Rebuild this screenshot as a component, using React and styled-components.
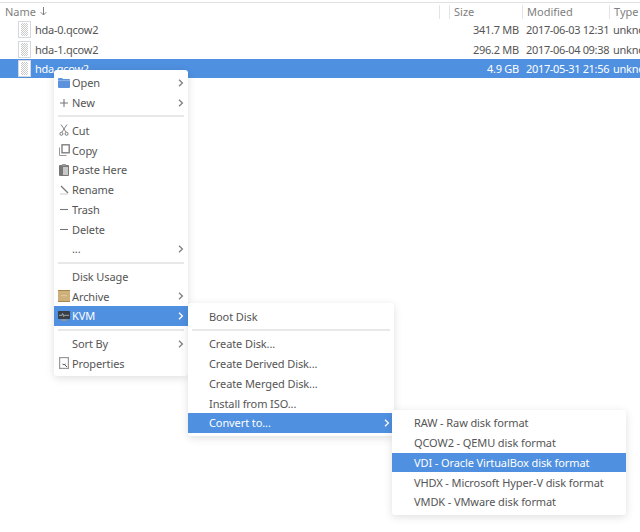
import React from "react";
import styled, { createGlobalStyle } from "styled-components";

const Global = createGlobalStyle`
  html, body { margin: 0; padding: 0; background: #fff; }
  body { font-family: "Noto Sans", "Open Sans", sans-serif; font-size: 11px; color: #555; }
`;

const Page = styled.div`
  position: relative;
  width: 640px;
  height: 532px;
  overflow: hidden;
  background: #fff;
`;

const Header = styled.div`
  display: grid;
  grid-template-columns: 439px 10px 73px 87px 31px;
  height: 17px;
  margin-top: 2px;
  border-top: 1px solid #e2e2e2;
  color: #808080;
  align-items: center;
`;

const HeadCell = styled.div`
  display: flex;
  align-items: center;
  gap: 4px;
  height: 14px;
  line-height: 14px;
  padding-left: ${p => p.$pad ?? 4}px;
  border-left: ${p => (p.$first ? "none" : "1px solid #e4e4e4")};
  white-space: nowrap;
  overflow: hidden;
`;

const Row = styled.div`
  display: grid;
  grid-template-columns: 440px 80px 87px 33px;
  height: ${p => (p.$selected ? 18.5 : 19.5)}px;
  align-items: center;
  background: ${p => (p.$selected ? "#4f90e0" : "#fff")};
  color: ${p => (p.$selected ? "#fff" : "#555")};
  white-space: nowrap;
  letter-spacing: -0.25px;
`;

const NameCell = styled.div`
  display: flex;
  align-items: center;
  gap: 4px;
  padding-left: 18px;
`;

const SizeCell = styled.div`
  text-align: right;
  padding-right: 1px;
`;

const DateCell = styled.div`
  padding-left: 6px;
  letter-spacing: -0.33px;
`;

const TypeCell = styled.div`
  padding-left: 6px;
  overflow: hidden;
`;

const Menu = styled.div`
  position: absolute;
  left: ${p => p.$left}px;
  top: ${p => p.$top}px;
  width: ${p => p.$width}px;
  padding: 3px 0;
  background: #fff;
  border-radius: 3px;
  box-shadow: 0 2px 8px rgba(0, 0, 0, 0.13);
  color: #555;
  letter-spacing: -0.1px;
`;

const Item = styled.div`
  display: flex;
  align-items: center;
  height: 19.75px;
  padding-left: ${p => p.$indent}px;
  padding-right: 4px;
  background: ${p => (p.$active ? "#4f90e0" : "transparent")};
  color: ${p => (p.$active ? "#fff" : "inherit")};
  white-space: nowrap;
`;

const IconSlot = styled.span`
  display: flex;
  align-items: center;
  justify-content: center;
  width: 14px;
  height: 14px;
  margin-right: 1px;
  margin-left: -15px;
  flex: none;
`;

const Label = styled.span`
  flex: 1;
`;

const Separator = styled.div`
  height: 2px;
  margin: 2.95px 4px;
  background: #e8e8e8;
`;

const Chevron = ({ light }) => (
  <svg width="6" height="8" viewBox="0 0 6 8" fill="none" stroke={light ? "#fff" : "#808080"} strokeWidth="1.3">
    <path d="M1 .8 4.4 4 1 7.2" />
  </svg>
);

const SortArrow = () => (
  <svg width="7" height="9" viewBox="0 0 7 9" fill="none" stroke="#808080" strokeWidth="1">
    <path d="M3.5 0v8M.8 5.3 3.5 8l2.7-2.7" />
  </svg>
);

const FileIcon = ({ id }) => (
  <svg width="13" height="17" viewBox="0 0 13 17" style={{ flex: "none" }}>
    <defs>
      <pattern id={id} width="2" height="2" patternUnits="userSpaceOnUse">
        <rect width="2" height="2" fill="#fff" />
        <rect width="1" height="1" fill="#c9c9c9" />
        <rect x="1" y="1" width="1" height="1" fill="#c9c9c9" />
      </pattern>
    </defs>
    <rect x=".5" y=".5" width="12" height="16" fill="#fff" stroke="#d5d8de" />
    <rect x="3" y="2" width="7" height="13" fill={`url(#${id})`} />
  </svg>
);

const G = "#777";
const icons = {
  open: (
    <svg width="12" height="10" viewBox="0 0 12 10">
      <path d="M0 1a1 1 0 0 1 1-1h3l1 1h6a1 1 0 0 1 1 1v7a1 1 0 0 1-1 1H1a1 1 0 0 1-1-1z" fill="#5c93dc" />
      <path d="M0 2h12v1H0z" fill="#8ab4e8" />
    </svg>
  ),
  new: (
    <svg width="10" height="10" viewBox="0 0 10 10"><path d="M5 1v8M1 5h8" stroke={G} strokeWidth="1.1" /></svg>
  ),
  cut: (
    <svg width="10" height="12" viewBox="0 0 10 12" fill="none" stroke={G}>
      <path d="M2 .5 7 8M8 .5 3 8" strokeWidth=".9" />
      <circle cx="2.4" cy="9.8" r="1.5" />
      <circle cx="7.6" cy="9.8" r="1.5" />
    </svg>
  ),
  copy: (
    <svg width="11" height="12" viewBox="0 0 11 12" fill="none">
      <path d="M.5 3.5v8h7" stroke="#999" />
      <rect x="3" y=".8" width="7.2" height="8" stroke={G} strokeWidth="1.3" />
    </svg>
  ),
  paste: (
    <svg width="10" height="12" viewBox="0 0 10 12">
      <rect x="0" y="1" width="10" height="11" rx="1" fill="#777" />
      <rect x="3" y="0" width="4" height="2" fill="#999" />
      <rect x="4" y="3" width="5" height="8" fill="#c8c8c8" />
    </svg>
  ),
  rename: (
    <svg width="12" height="12" viewBox="0 0 12 12" fill="none">
      <path d="M3 2 10 9" stroke={G} strokeWidth="1.3" />
      <path d="M2 10h8" stroke="#ddd" strokeWidth="1.5" />
    </svg>
  ),
  dash: (
    <svg width="10" height="3" viewBox="0 0 10 3"><path d="M1 1.5h8" stroke={G} strokeWidth="1.1" /></svg>
  ),
  archive: (
    <svg width="12" height="12" viewBox="0 0 12 12">
      <rect width="12" height="12" fill="#cdb07a" />
      <rect width="12" height="1" fill="#a9874c" />
      <rect y="11" width="12" height="1" fill="#a9874c" />
      <rect x="3" y="5" width="6" height="1.2" fill="#e0c996" />
    </svg>
  ),
  kvm: (
    <svg width="12" height="12" viewBox="0 0 12 12">
      <rect y="1" width="12" height="8" rx=".5" fill="#3a3f45" />
      <path d="M1 5.3h3l.7-1.8 1 3 .8-1.2H11" stroke="#dfe6ee" strokeWidth=".6" fill="none" />
      <rect x="3.5" y="9" width="5" height="2" fill="#8d949c" />
    </svg>
  ),
  props: (
    <svg width="10" height="12" viewBox="0 0 10 12" fill="none">
      <rect x=".6" y=".6" width="8.8" height="10.8" stroke="#999" strokeWidth="1.2" />
      <path d="M6 8 8 10M3.5 7a2 2 0 0 0 3 0" stroke="#555" />
    </svg>
  ),
};

const MenuItem = ({ icon, label, sub, active, indent = 18 }) => (
  <Item $active={active} $indent={indent}>
    {icon && <IconSlot>{icons[icon]}</IconSlot>}
    <Label>{label}</Label>
    {sub && <Chevron light={active} />}
  </Item>
);

const files = [
  { id: "f0", name: "hda-0.qcow2", size: "341.7 MB", date: "2017-06-03 12:31" },
  { id: "f1", name: "hda-1.qcow2", size: "296.2 MB", date: "2017-06-04 09:38" },
  { id: "f2", name: "hda.qcow2", size: "4.9 GB", date: "2017-05-31 21:56", selected: true },
];

export default function App() {
  return (
    <Page>
      <Global />
      <Header>
        <HeadCell $first $pad={5}>Name <SortArrow /></HeadCell>
        <HeadCell />
        <HeadCell>Size</HeadCell>
        <HeadCell>Modified</HeadCell>
        <HeadCell>Type</HeadCell>
      </Header>
      {files.map(f => (
        <Row key={f.id} $selected={f.selected}>
          <NameCell><FileIcon id={f.id} />{f.name}</NameCell>
          <SizeCell>{f.size}</SizeCell>
          <DateCell>{f.date}</DateCell>
          <TypeCell>unknown</TypeCell>
        </Row>
      ))}

      <Menu $left={54} $top={70} $width={134}>
        <MenuItem icon="open" label="Open" sub />
        <MenuItem icon="new" label="New" sub />
        <Separator />
        <MenuItem icon="cut" label="Cut" />
        <MenuItem icon="copy" label="Copy" />
        <MenuItem icon="paste" label="Paste Here" />
        <MenuItem icon="rename" label="Rename" />
        <MenuItem icon="dash" label="Trash" />
        <MenuItem icon="dash" label="Delete" />
        <MenuItem label="..." sub />
        <Separator />
        <MenuItem label="Disk Usage" />
        <MenuItem icon="archive" label="Archive" sub />
        <MenuItem icon="kvm" label="KVM" sub active />
        <Separator />
        <MenuItem label="Sort By" sub />
        <MenuItem icon="props" label="Properties" />
      </Menu>

      <Menu $left={188} $top={303.3} $width={206}>
        <MenuItem indent={21} label="Boot Disk" />
        <Separator />
        <MenuItem indent={21} label="Create Disk..." />
        <MenuItem indent={21} label="Create Derived Disk..." />
        <MenuItem indent={21} label="Create Merged Disk..." />
        <MenuItem indent={21} label="Install from ISO..." />
        <MenuItem indent={21} label="Convert to..." sub active />
      </Menu>

      <Menu $left={392} $top={410} $width={234}>
        <MenuItem indent={22} label="RAW - Raw disk format" />
        <MenuItem indent={22} label="QCOW2 - QEMU disk format" />
        <MenuItem indent={22} label="VDI - Oracle VirtualBox disk format" active />
        <MenuItem indent={22} label="VHDX - Microsoft Hyper-V disk format" />
        <MenuItem indent={22} label="VMDK - VMware disk format" />
      </Menu>
    </Page>
  );
}
